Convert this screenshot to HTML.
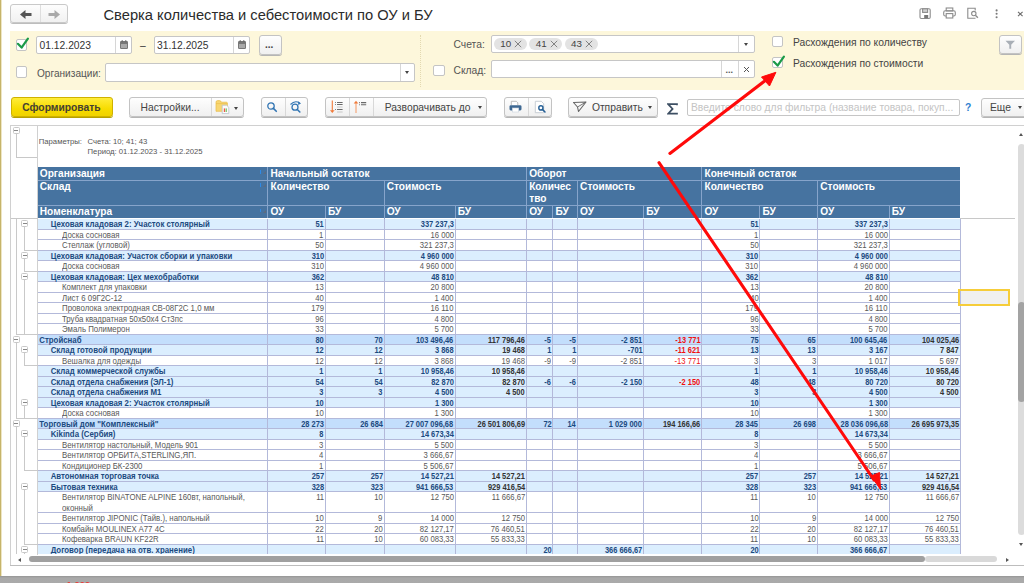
<!DOCTYPE html>
<html><head><meta charset="utf-8"><style>
html,body{margin:0;padding:0;background:#fff;}
body{width:1024px;height:583px;overflow:hidden;position:relative;font-family:"Liberation Sans",sans-serif;}
.a{position:absolute;}
.t{position:absolute;white-space:nowrap;}
</style></head><body>
<div class="a" style="left:0px;top:0px;width:1px;height:583px;background:#c6b46a"></div>
<div class="a" style="left:1px;top:0px;width:1px;height:583px;background:#eee6c4"></div>
<div class="a" style="left:10.2px;top:4.2px;width:58.3px;height:19.2px;box-sizing:border-box;border:1px solid #c9c9c9;border-radius:3px;background:linear-gradient(#fdfdfd,#f1f1f1);box-shadow:0 1px 0 #bdbdbd"></div>
<div class="a" style="left:40px;top:5.2px;width:1px;height:17.2px;background:#dedede"></div>
<svg class="a" style="left:18.8px;top:9px" width="16" height="11" viewBox="0 0 16 11"><path d="M1 5.5 L6.5 1 V4 H12.5 V7 H6.5 V10 Z" fill="#555"/></svg>
<svg class="a" style="left:44.8px;top:9px" width="16" height="11" viewBox="0 0 16 11"><path d="M15 5.5 L9.5 1 V4 H3.5 V7 H9.5 V10 Z" fill="#a9a9a9"/></svg>
<div class="t" style="left:103.5px;top:7.26px;font-size:14.7px;line-height:16.9px;color:#2b2b2b;transform:scaleY(1.04);transform-origin:0 13.54px;">Сверка количества и себестоимости по ОУ и БУ</div>
<svg class="a" style="left:0;top:0" width="1024" height="28" viewBox="0 0 1024 28">
<g fill="none" stroke="#8c8c8c" stroke-width="1.1">
<rect x="920" y="8.8" width="10.2" height="9.7" rx="1.2"/>
<rect x="922.6" y="8.8" width="5" height="3.6" fill="#d0d0d0"/>
<rect x="946.2" y="8" width="6.6" height="3"/>
<rect x="943.7" y="10.8" width="11.6" height="5.2" rx="1.6"/>
<rect x="946.2" y="13.6" width="6.6" height="4.4" fill="#fff"/>
<path d="M975.5 18.2 H967.8 V8.2 H975.2 V10.5"/>
<circle cx="973.8" cy="13.6" r="2.2"/>
</g>
<path d="M975.4 15.2 L977.9 17.8" stroke="#8c8c8c" stroke-width="1.4"/>
<rect x="924.2" y="15" width="4" height="3.2" fill="#777"/>
<g fill="#7a7a7a"><circle cx="996.6" cy="10.4" r="1.05"/><circle cx="996.6" cy="13.8" r="1.05"/><circle cx="996.6" cy="17.2" r="1.05"/></g>
<path d="M1018 11.8 L1022.6 16.2 M1022.6 11.8 L1018 16.2" stroke="#6a6a6a" stroke-width="1.1"/>
</svg>
<div class="a" style="left:10px;top:30.5px;width:1014px;height:59px;background:#fdf7db"></div>
<div class="a" style="left:15.6px;top:39.3px;width:11.5px;height:11.5px;box-sizing:border-box;border:1px solid #c4c4c4;border-radius:2px;background:#fff"></div>
<svg class="a" style="left:15.6px;top:35.3px" width="14" height="15" viewBox="0 0 14 15"><path d="M1.9 8.8 L5.6 12.6 L11.9 3.6" fill="none" stroke="#1a9a48" stroke-width="2.2" stroke-linecap="round" stroke-linejoin="round"/></svg>
<div class="a" style="left:36.2px;top:36.2px;width:95.8px;height:18.3px;box-sizing:border-box;border:1px solid #c6c6c6;border-radius:2px;background:#fff"></div>
<div class="a" style="left:115px;top:37.2px;width:1px;height:16.3px;background:#d6d6d6"></div>
<div class="t" style="left:39.5px;top:40.01px;font-size:10.3px;line-height:11.85px;color:#333;">01.12.2023</div>
<svg class="a" style="left:119px;top:39px" width="10" height="11" viewBox="0 0 10 11"><rect x="1" y="2" width="8" height="8" rx="1.3" fill="#777"/><rect x="2" y="5" width="6" height="4" fill="#a9a9a9"/><path d="M3.2 1V3.2M6.8 1V3.2" stroke="#666" stroke-width="0.9"/></svg>
<div class="t" style="left:140px;top:40.01px;font-size:10.3px;line-height:11.85px;color:#333;">–</div>
<div class="a" style="left:153.8px;top:36.2px;width:96.2px;height:18.3px;box-sizing:border-box;border:1px solid #c6c6c6;border-radius:2px;background:#fff"></div>
<div class="a" style="left:233px;top:37.2px;width:1px;height:16.3px;background:#d6d6d6"></div>
<div class="t" style="left:157px;top:40.01px;font-size:10.3px;line-height:11.85px;color:#333;">31.12.2025</div>
<svg class="a" style="left:237px;top:39px" width="10" height="11" viewBox="0 0 10 11"><rect x="1" y="2" width="8" height="8" rx="1.3" fill="#777"/><rect x="2" y="5" width="6" height="4" fill="#a9a9a9"/><path d="M3.2 1V3.2M6.8 1V3.2" stroke="#666" stroke-width="0.9"/></svg>
<div class="a" style="left:258.5px;top:35px;width:23px;height:19.5px;box-sizing:border-box;border:1px solid #c3c3c3;border-radius:3px;background:linear-gradient(#fefefe,#f0f0f0);box-shadow:0 1px 0 #b5b5b5;"></div>
<div class="t" style="left:265px;top:39.28px;font-size:10px;line-height:11.5px;color:#444;font-weight:bold;">...</div>
<div class="a" style="left:15.6px;top:66.2px;width:11.5px;height:11.5px;box-sizing:border-box;border:1px solid #c4c4c4;border-radius:2px;background:#fff"></div>
<div class="t" style="left:37px;top:67.70px;font-size:10.1px;line-height:11.61px;color:#555;">Организации:</div>
<div class="a" style="left:105.2px;top:63px;width:310.3px;height:18.6px;box-sizing:border-box;border:1px solid #c6c6c6;border-radius:2px;background:#fff"></div>
<div class="a" style="left:400px;top:64px;width:1px;height:16.6px;background:#d6d6d6"></div>
<div class="a" style="left:405px;top:71px;width:0;height:0;border-left:2.5px solid transparent;border-right:2.5px solid transparent;border-top:3px solid #444"></div>
<div class="a" style="left:420px;top:35px;width:0px;height:52px;border-left:1px dotted #e3d9b0"></div>
<div class="t" style="left:453.5px;top:39.01px;font-size:10.3px;line-height:11.85px;color:#555;">Счета:</div>
<div class="a" style="left:491px;top:35px;width:263.8px;height:17.5px;box-sizing:border-box;border:1px solid #c6c6c6;border-radius:2px;background:#fff"></div>
<div class="a" style="left:738px;top:36px;width:1px;height:15.5px;background:#d6d6d6"></div>
<div class="a" style="left:743.5px;top:42.5px;width:0;height:0;border-left:2.5px solid transparent;border-right:2.5px solid transparent;border-top:3px solid #444"></div>
<div class="a" style="left:493.7px;top:37.5px;width:33.2px;height:12.7px;background:#e3e3e3;border-radius:6.4px"></div>
<div class="t" style="left:500.2px;top:38.47px;font-size:9.8px;line-height:11.27px;color:#444;">10</div>
<svg class="a" style="left:514.2px;top:40px" width="8" height="8" viewBox="0 0 8 8"><path d="M0.8 0.8L7.2 7.2M7.2 0.8L0.8 7.2" stroke="#777" stroke-width="0.9"/></svg>
<div class="a" style="left:529.2px;top:37.5px;width:32.8px;height:12.7px;background:#e3e3e3;border-radius:6.4px"></div>
<div class="t" style="left:535.7px;top:38.47px;font-size:9.8px;line-height:11.27px;color:#444;">41</div>
<svg class="a" style="left:549.7px;top:40px" width="8" height="8" viewBox="0 0 8 8"><path d="M0.8 0.8L7.2 7.2M7.2 0.8L0.8 7.2" stroke="#777" stroke-width="0.9"/></svg>
<div class="a" style="left:564.5px;top:37.5px;width:33.4px;height:12.7px;background:#e3e3e3;border-radius:6.4px"></div>
<div class="t" style="left:571.0px;top:38.47px;font-size:9.8px;line-height:11.27px;color:#444;">43</div>
<svg class="a" style="left:585.0px;top:40px" width="8" height="8" viewBox="0 0 8 8"><path d="M0.8 0.8L7.2 7.2M7.2 0.8L0.8 7.2" stroke="#777" stroke-width="0.9"/></svg>
<div class="a" style="left:433px;top:64.5px;width:11.5px;height:11.5px;box-sizing:border-box;border:1px solid #c4c4c4;border-radius:2px;background:#fff"></div>
<div class="t" style="left:453.5px;top:64.51px;font-size:10.3px;line-height:11.85px;color:#555;">Склад:</div>
<div class="a" style="left:491px;top:60.3px;width:263.8px;height:18.2px;box-sizing:border-box;border:1px solid #c6c6c6;border-radius:2px;background:#fff"></div>
<div class="a" style="left:721.3px;top:61.3px;width:1px;height:16.2px;background:#d6d6d6"></div>
<div class="a" style="left:738px;top:61.3px;width:1px;height:16.2px;background:#d6d6d6"></div>
<div class="t" style="left:725.5px;top:65.21px;font-size:9px;line-height:10.35px;color:#555;font-weight:bold;">...</div>
<svg class="a" style="left:742.5px;top:66px" width="7" height="7" viewBox="0 0 7 7"><path d="M1 1L6 6M6 1L1 6" stroke="#555" stroke-width="1"/></svg>
<div class="a" style="left:771.6px;top:35.5px;width:11.5px;height:11.5px;box-sizing:border-box;border:1px solid #c4c4c4;border-radius:2px;background:#fff"></div>
<div class="t" style="left:792.9px;top:36.91px;font-size:10.3px;line-height:11.85px;color:#444;transform:scaleY(1.05);transform-origin:0 9.49px;">Расхождения по количеству</div>
<div class="a" style="left:771.6px;top:56.6px;width:11.5px;height:11.5px;box-sizing:border-box;border:1px solid #c4c4c4;border-radius:2px;background:#fff"></div>
<svg class="a" style="left:771.6px;top:52.6px" width="14" height="15" viewBox="0 0 14 15"><path d="M1.9 8.8 L5.6 12.6 L11.9 3.6" fill="none" stroke="#1a9a48" stroke-width="2.2" stroke-linecap="round" stroke-linejoin="round"/></svg>
<div class="t" style="left:792.9px;top:58.01px;font-size:10.3px;line-height:11.85px;color:#444;transform:scaleY(1.05);transform-origin:0 9.49px;">Расхождения по стоимости</div>
<div class="a" style="left:999.2px;top:35px;width:23.3px;height:19px;box-sizing:border-box;border:1px solid #c3c3c3;border-radius:3px;background:linear-gradient(#fefefe,#f0f0f0);box-shadow:0 1px 0 #b5b5b5;"></div>
<svg class="a" style="left:1005px;top:40px" width="11" height="10" viewBox="0 0 11 10"><path d="M0.5 0.8H10L6.2 4.8V8.8H4.3V4.8Z" fill="#a9afb6"/></svg>
<div class="a" style="left:10.6px;top:97.2px;width:102px;height:19.4px;box-sizing:border-box;border:1px solid #cfb100;border-radius:3px;background:linear-gradient(#ffec3a,#f7dc00 60%,#f0d200);box-shadow:0 1px 0 #b5a000"></div>
<div class="t" style="left:22.2px;top:102.11px;font-size:10.3px;line-height:11.85px;color:#444033;font-weight:bold;transform:scaleY(1.06);transform-origin:0 9.49px;">Сформировать</div>
<div class="a" style="left:129px;top:97.2px;width:114.9px;height:19.4px;box-sizing:border-box;border:1px solid #c3c3c3;border-radius:3px;background:linear-gradient(#fefefe,#f0f0f0);box-shadow:0 1px 0 #b5b5b5;"></div>
<div class="a" style="left:211px;top:98.2px;width:1px;height:17.4px;background:#d8d8d8"></div>
<div class="t" style="left:140.5px;top:102.11px;font-size:10.3px;line-height:11.85px;color:#444;">Настройки...</div>
<svg class="a" style="left:214px;top:99px" width="18" height="16" viewBox="0 0 18 16"><path d="M2 3.2Q2 1.6 3.6 1.6H5.6Q7 1.6 7.3 3.2H12.3Q13.4 3.2 13.4 4.2V12.3H2Z" fill="#f8d672" stroke="#e8bb48" stroke-width="0.7"/><path d="M2 4.6H13.4" stroke="#e8bb48" stroke-width="0.6"/><path d="M8.2 6.2H12.6L14.8 8.3V14.6H8.2Z" fill="#fbfbfb" stroke="#b9c2cc" stroke-width="0.8"/><rect x="9.8" y="9.4" width="1.3" height="3.6" fill="#ee5a4a"/><rect x="11.6" y="9.4" width="1.3" height="3.6" fill="#7bc66a"/></svg>
<div class="a" style="left:234px;top:107px;width:0;height:0;border-left:2.5px solid transparent;border-right:2.5px solid transparent;border-top:3px solid #444"></div>
<div class="a" style="left:260.5px;top:97.2px;width:47.5px;height:19.4px;box-sizing:border-box;border:1px solid #c3c3c3;border-radius:3px;background:linear-gradient(#fefefe,#f0f0f0);box-shadow:0 1px 0 #b5b5b5;"></div>
<div class="a" style="left:284.75px;top:98.2px;width:1px;height:17.4px;background:#d8d8d8"></div>
<svg class="a" style="left:266px;top:101px" width="13" height="12" viewBox="0 0 13 12"><circle cx="5" cy="5" r="3.2" fill="none" stroke="#3275b3" stroke-width="1.3"/><path d="M7.4 7.4L10.3 10.3" stroke="#3275b3" stroke-width="1.6" stroke-linecap="round"/></svg>
<svg class="a" style="left:289px;top:100px" width="14" height="13" viewBox="0 0 14 13"><circle cx="6" cy="7.2" r="3" fill="none" stroke="#3275b3" stroke-width="1.3"/><path d="M8.3 9.5L10.8 12" stroke="#3275b3" stroke-width="1.6" stroke-linecap="round"/><path d="M1.5 4.5 Q6 0 10.5 3" fill="none" stroke="#3275b3" stroke-width="1.1"/><path d="M9.2 1.2L12 3.6L9.2 5" fill="#3275b3"/></svg>
<div class="a" style="left:324.75px;top:97.2px;width:162.5px;height:19.4px;box-sizing:border-box;border:1px solid #c3c3c3;border-radius:3px;background:linear-gradient(#fefefe,#f0f0f0);box-shadow:0 1px 0 #b5b5b5;"></div>
<div class="a" style="left:349.25px;top:98.2px;width:1px;height:17.4px;background:#d8d8d8"></div>
<div class="a" style="left:373px;top:98.2px;width:1px;height:17.4px;background:#d8d8d8"></div>
<svg class="a" style="left:328px;top:99px" width="18" height="16" viewBox="0 0 18 16"><path d="M4.3 1.5V12" stroke="#f07a3a" stroke-width="1.1"/><path d="M2 11.2L4.3 14L6.6 11.2Z" fill="#f07a3a"/><g stroke="#6a6a6a" stroke-width="1"><path d="M7 3.5H7.8M9 3.5H14.6M7 5.5H7.8M9 5.5H14.6M7 10.5H7.8M9 10.5H14.6"/></g><g stroke="#bbb" stroke-width="0.8"><path d="M9 8H14.6M9 13H14.6"/></g></svg>
<svg class="a" style="left:352px;top:99px" width="18" height="16" viewBox="0 0 18 16"><path d="M4 4V14" stroke="#f4a070" stroke-width="1.1"/><path d="M1.7 4.6L4 1.8L6.3 4.6Z" fill="#f07a3a"/><g stroke="#6a6a6a" stroke-width="1.1"><path d="M7 3.6H7.8M9 3.6H14.2M7 5.8H7.8M9 5.8H14.2"/></g></svg>
<div class="t" style="left:384.7px;top:102.11px;font-size:10.3px;line-height:11.85px;color:#444;">Разворачивать до</div>
<div class="a" style="left:478px;top:106px;width:0;height:0;border-left:2.5px solid transparent;border-right:2.5px solid transparent;border-top:3px solid #444"></div>
<div class="a" style="left:503.5px;top:97.2px;width:48px;height:19.4px;box-sizing:border-box;border:1px solid #c3c3c3;border-radius:3px;background:linear-gradient(#fefefe,#f0f0f0);box-shadow:0 1px 0 #b5b5b5;"></div>
<div class="a" style="left:528.25px;top:98.2px;width:1px;height:17.4px;background:#d8d8d8"></div>
<svg class="a" style="left:508px;top:99px" width="16" height="15" viewBox="0 0 16 15"><path d="M3.3 6V2.3H8.3L9.8 3.8V6" fill="#fff" stroke="#b5b5b5" stroke-width="0.9"/><rect x="1.5" y="6.2" width="12" height="5.2" rx="1.3" fill="#3e6892"/><rect x="4.3" y="9" width="6.4" height="4" fill="#fff" stroke="#c9d3dd" stroke-width="0.6"/></svg>
<svg class="a" style="left:533px;top:99px" width="15" height="16" viewBox="0 0 15 16"><path d="M2.3 2.3H8.3L10.7 4.7V13.7H2.3Z" fill="#fff" stroke="#c2c8d0" stroke-width="0.9"/><circle cx="7.9" cy="8.9" r="2.1" fill="none" stroke="#245f95" stroke-width="1.4"/><path d="M9.4 10.4L12 13" stroke="#245f95" stroke-width="1.5" stroke-linecap="round"/></svg>
<div class="a" style="left:568.25px;top:97.2px;width:89.25px;height:19.4px;box-sizing:border-box;border:1px solid #c3c3c3;border-radius:3px;background:linear-gradient(#fefefe,#f0f0f0);box-shadow:0 1px 0 #b5b5b5;"></div>
<svg class="a" style="left:572px;top:100px" width="16" height="13" viewBox="0 0 16 13"><path d="M1.5 2.5L14 2L6.5 11.5L5.5 7Z" fill="none" stroke="#666" stroke-width="1.1" stroke-linejoin="round"/><path d="M5.5 7L13.5 2.3" stroke="#666" stroke-width="0.9"/></svg>
<div class="t" style="left:591.9px;top:102.11px;font-size:10.3px;line-height:11.85px;color:#444;">Отправить</div>
<div class="a" style="left:648px;top:106px;width:0;height:0;border-left:2.5px solid transparent;border-right:2.5px solid transparent;border-top:3px solid #444"></div>
<svg class="a" style="left:667px;top:102.5px" width="11" height="12" viewBox="0 0 11 12"><path d="M10 2.2 V1.2 H1.2 L5.6 5.9 L1.2 10.7 H10 V9.7" fill="none" stroke="#3d4f63" stroke-width="1.7" stroke-linejoin="miter"/></svg>
<div class="a" style="left:687px;top:98.75px;width:273px;height:17.5px;box-sizing:border-box;border:1px solid #c6c6c6;border-radius:2px;background:#fff"></div>
<div class="t" style="left:691px;top:101.51px;font-size:10.3px;line-height:11.85px;color:#c4c4c4;">Введите слово для фильтра (название товара, покуп...</div>
<div class="t" style="left:965px;top:101.51px;font-size:10.3px;line-height:11.85px;color:#2f7fd0;font-weight:bold;">?</div>
<div class="a" style="left:980.5px;top:97.5px;width:60px;height:19.3px;box-sizing:border-box;border:1px solid #c3c3c3;border-radius:3px;background:linear-gradient(#fefefe,#f0f0f0);box-shadow:0 1px 0 #b5b5b5;"></div>
<div class="t" style="left:990px;top:102.11px;font-size:10.3px;line-height:11.85px;color:#444;">Еще</div>
<div class="a" style="left:1017.5px;top:106px;width:0;height:0;border-left:2.5px solid transparent;border-right:2.5px solid transparent;border-top:3px solid #444"></div>
<div class="a" style="left:10px;top:125px;width:1014px;height:1px;background:#d0d0d0"></div>
<div class="a" style="left:10px;top:125px;width:1px;height:440.5px;background:#d0d0d0"></div>
<div class="a" style="left:10px;top:565px;width:1014px;height:1px;background:#bdbdbd"></div>
<div class="a" style="left:37px;top:125px;width:1px;height:430px;background:#d0d0d0"></div>
<div class="a" style="left:15.5px;top:134px;width:1px;height:22.5px;background:#c8c8c8"></div>
<div class="a" style="left:15.5px;top:156.5px;width:21px;height:1px;background:#c8c8c8"></div>
<div class="a" style="left:12.5px;top:127.30000000000001px;width:7px;height:7px;box-sizing:border-box;border:1px solid #c8c8c8;border-radius:1.5px;background:#fff"></div>
<div class="a" style="left:14px;top:130.3px;width:4px;height:1px;background:#888"></div>
<div class="t" style="left:38.8px;top:137.91px;font-size:7.7px;line-height:8.85px;color:#555;">Параметры:</div>
<div class="t" style="left:87.6px;top:137.91px;font-size:7.7px;line-height:8.85px;color:#555;">Счета: 10; 41; 43</div>
<div class="t" style="left:87.6px;top:148.31px;font-size:7.7px;line-height:8.85px;color:#555;">Период: 01.12.2023 - 31.12.2025</div>
<div class="a" style="left:37.5px;top:166.8px;width:922.8px;height:51.69999999999999px;background:#4673a0"></div>
<div class="a" style="left:37.5px;top:179.5px;width:922.8px;height:1px;background:#86a4cb"></div>
<div class="a" style="left:37.5px;top:205.3px;width:922.8px;height:1px;background:#86a4cb"></div>
<div class="a" style="left:267.3px;top:166.8px;width:1px;height:51.69999999999999px;background:#86a4cb"></div>
<div class="a" style="left:526.0px;top:166.8px;width:1px;height:51.69999999999999px;background:#86a4cb"></div>
<div class="a" style="left:701.3px;top:166.8px;width:1px;height:51.69999999999999px;background:#86a4cb"></div>
<div class="a" style="left:383.5px;top:179.5px;width:1px;height:39.0px;background:#86a4cb"></div>
<div class="a" style="left:576.9px;top:179.5px;width:1px;height:39.0px;background:#86a4cb"></div>
<div class="a" style="left:817.1px;top:179.5px;width:1px;height:39.0px;background:#86a4cb"></div>
<div class="a" style="left:324.7px;top:205.3px;width:1px;height:13.199999999999989px;background:#86a4cb"></div>
<div class="a" style="left:454.5px;top:205.3px;width:1px;height:13.199999999999989px;background:#86a4cb"></div>
<div class="a" style="left:552.3px;top:205.3px;width:1px;height:13.199999999999989px;background:#86a4cb"></div>
<div class="a" style="left:643.1px;top:205.3px;width:1px;height:13.199999999999989px;background:#86a4cb"></div>
<div class="a" style="left:759.3px;top:205.3px;width:1px;height:13.199999999999989px;background:#86a4cb"></div>
<div class="a" style="left:888.6px;top:205.3px;width:1px;height:13.199999999999989px;background:#86a4cb"></div>
<div class="t" style="left:39.8px;top:167.85px;font-size:10.15px;line-height:11.67px;color:#ffffff;font-weight:bold;">Организация</div>
<div class="t" style="left:39.8px;top:180.95px;font-size:10.15px;line-height:11.67px;color:#ffffff;font-weight:bold;">Склад</div>
<div class="t" style="left:39.8px;top:206.35px;font-size:10.15px;line-height:11.67px;color:#ffffff;font-weight:bold;">Номенклатура</div>
<div class="t" style="left:270.5px;top:167.85px;font-size:10.15px;line-height:11.67px;color:#ffffff;font-weight:bold;">Начальный остаток</div>
<div class="t" style="left:529.2px;top:167.85px;font-size:10.15px;line-height:11.67px;color:#ffffff;font-weight:bold;">Оборот</div>
<div class="t" style="left:704.5px;top:167.85px;font-size:10.15px;line-height:11.67px;color:#ffffff;font-weight:bold;">Конечный остаток</div>
<div class="t" style="left:270.5px;top:180.95px;font-size:10.15px;line-height:11.67px;color:#ffffff;font-weight:bold;">Количество</div>
<div class="t" style="left:386.7px;top:180.95px;font-size:10.15px;line-height:11.67px;color:#ffffff;font-weight:bold;">Стоимость</div>
<div class="t" style="left:580.1px;top:180.95px;font-size:10.15px;line-height:11.67px;color:#ffffff;font-weight:bold;">Стоимость</div>
<div class="t" style="left:704.5px;top:180.95px;font-size:10.15px;line-height:11.67px;color:#ffffff;font-weight:bold;">Количество</div>
<div class="t" style="left:820.3000000000001px;top:180.95px;font-size:10.15px;line-height:11.67px;color:#ffffff;font-weight:bold;">Стоимость</div>
<div class="t" style="left:529.2px;top:180.95px;font-size:10.15px;line-height:11.67px;color:#ffffff;font-weight:bold;">Количес</div>
<div class="t" style="left:529.2px;top:193.25px;font-size:10.15px;line-height:11.67px;color:#ffffff;font-weight:bold;">тво</div>
<div class="t" style="left:270.5px;top:206.35px;font-size:10.15px;line-height:11.67px;color:#ffffff;font-weight:bold;">ОУ</div>
<div class="t" style="left:327.9px;top:206.35px;font-size:10.15px;line-height:11.67px;color:#ffffff;font-weight:bold;">БУ</div>
<div class="t" style="left:386.7px;top:206.35px;font-size:10.15px;line-height:11.67px;color:#ffffff;font-weight:bold;">ОУ</div>
<div class="t" style="left:457.7px;top:206.35px;font-size:10.15px;line-height:11.67px;color:#ffffff;font-weight:bold;">БУ</div>
<div class="t" style="left:529.2px;top:206.35px;font-size:10.15px;line-height:11.67px;color:#ffffff;font-weight:bold;">ОУ</div>
<div class="t" style="left:555.5px;top:206.35px;font-size:10.15px;line-height:11.67px;color:#ffffff;font-weight:bold;">БУ</div>
<div class="t" style="left:580.1px;top:206.35px;font-size:10.15px;line-height:11.67px;color:#ffffff;font-weight:bold;">ОУ</div>
<div class="t" style="left:646.3000000000001px;top:206.35px;font-size:10.15px;line-height:11.67px;color:#ffffff;font-weight:bold;">БУ</div>
<div class="t" style="left:704.5px;top:206.35px;font-size:10.15px;line-height:11.67px;color:#ffffff;font-weight:bold;">ОУ</div>
<div class="t" style="left:762.5px;top:206.35px;font-size:10.15px;line-height:11.67px;color:#ffffff;font-weight:bold;">БУ</div>
<div class="t" style="left:820.3000000000001px;top:206.35px;font-size:10.15px;line-height:11.67px;color:#ffffff;font-weight:bold;">ОУ</div>
<div class="t" style="left:891.8000000000001px;top:206.35px;font-size:10.15px;line-height:11.67px;color:#ffffff;font-weight:bold;">БУ</div>
<div class="a" style="left:260.3px;top:170.2px;width:1.2px;height:3.8px;background:#2f8ae6"></div>
<div class="a" style="left:262.8px;top:171.2px;width:0;height:0;border-left:3.5px solid transparent;border-bottom:3px solid #5b6b80"></div>
<div class="a" style="left:260.3px;top:183.2px;width:1.2px;height:3.8px;background:#2f8ae6"></div>
<div class="a" style="left:262.8px;top:184.2px;width:0;height:0;border-left:3.5px solid transparent;border-bottom:3px solid #5b6b80"></div>
<div class="a" style="left:260.3px;top:208.5px;width:1.2px;height:3.8px;background:#2f8ae6"></div>
<div class="a" style="left:262.8px;top:209.5px;width:0;height:0;border-left:3.5px solid transparent;border-bottom:3px solid #5b6b80"></div>
<div class="a" style="left:0;top:0;width:1024px;height:554px;overflow:hidden">
<div class="a" style="left:37.5px;top:218.5px;width:922.8px;height:11.0px;background:#dbeefe"></div>
<div class="a" style="left:37.5px;top:229.0px;width:922.8px;height:11.0px;background:#ffffff"></div>
<div class="a" style="left:37.5px;top:239.5px;width:922.8px;height:11.0px;background:#ffffff"></div>
<div class="a" style="left:37.5px;top:250.0px;width:922.8px;height:11.0px;background:#dbeefe"></div>
<div class="a" style="left:37.5px;top:260.5px;width:922.8px;height:11.0px;background:#ffffff"></div>
<div class="a" style="left:37.5px;top:271.0px;width:922.8px;height:11.0px;background:#dbeefe"></div>
<div class="a" style="left:37.5px;top:281.5px;width:922.8px;height:11.0px;background:#ffffff"></div>
<div class="a" style="left:37.5px;top:292.0px;width:922.8px;height:11.0px;background:#ffffff"></div>
<div class="a" style="left:37.5px;top:302.5px;width:922.8px;height:11.0px;background:#ffffff"></div>
<div class="a" style="left:37.5px;top:313.0px;width:922.8px;height:11.0px;background:#ffffff"></div>
<div class="a" style="left:37.5px;top:323.5px;width:922.8px;height:11.0px;background:#ffffff"></div>
<div class="a" style="left:37.5px;top:334.0px;width:922.8px;height:11.0px;background:#c3defc"></div>
<div class="a" style="left:37.5px;top:344.5px;width:922.8px;height:11.0px;background:#dbeefe"></div>
<div class="a" style="left:37.5px;top:355.0px;width:922.8px;height:11.0px;background:#ffffff"></div>
<div class="a" style="left:37.5px;top:365.5px;width:922.8px;height:11.0px;background:#dbeefe"></div>
<div class="a" style="left:37.5px;top:376.0px;width:922.8px;height:11.0px;background:#dbeefe"></div>
<div class="a" style="left:37.5px;top:386.5px;width:922.8px;height:11.0px;background:#dbeefe"></div>
<div class="a" style="left:37.5px;top:397.0px;width:922.8px;height:11.0px;background:#dbeefe"></div>
<div class="a" style="left:37.5px;top:407.5px;width:922.8px;height:11.0px;background:#ffffff"></div>
<div class="a" style="left:37.5px;top:418.0px;width:922.8px;height:11.0px;background:#c3defc"></div>
<div class="a" style="left:37.5px;top:428.5px;width:922.8px;height:11.0px;background:#dbeefe"></div>
<div class="a" style="left:37.5px;top:439.0px;width:922.8px;height:11.0px;background:#ffffff"></div>
<div class="a" style="left:37.5px;top:449.5px;width:922.8px;height:11.0px;background:#ffffff"></div>
<div class="a" style="left:37.5px;top:460.0px;width:922.8px;height:11.0px;background:#ffffff"></div>
<div class="a" style="left:37.5px;top:470.5px;width:922.8px;height:11.0px;background:#dbeefe"></div>
<div class="a" style="left:37.5px;top:481.0px;width:922.8px;height:11.0px;background:#dbeefe"></div>
<div class="a" style="left:37.5px;top:491.5px;width:922.8px;height:21.5px;background:#ffffff"></div>
<div class="a" style="left:37.5px;top:512.5px;width:922.8px;height:11.0px;background:#ffffff"></div>
<div class="a" style="left:37.5px;top:523.0px;width:922.8px;height:11.0px;background:#ffffff"></div>
<div class="a" style="left:37.5px;top:533.5px;width:922.8px;height:11.0px;background:#ffffff"></div>
<div class="a" style="left:37.5px;top:544.0px;width:922.8px;height:11.0px;background:#dbeefe"></div>
<div class="a" style="left:37.5px;top:228.5px;width:922.8px;height:1px;background:#b3b9da"></div>
<div class="a" style="left:37.5px;top:239.0px;width:922.8px;height:1px;background:#b3b9da"></div>
<div class="a" style="left:37.5px;top:249.5px;width:922.8px;height:1px;background:#b3b9da"></div>
<div class="a" style="left:37.5px;top:260.0px;width:922.8px;height:1px;background:#b3b9da"></div>
<div class="a" style="left:37.5px;top:270.5px;width:922.8px;height:1px;background:#b3b9da"></div>
<div class="a" style="left:37.5px;top:281.0px;width:922.8px;height:1px;background:#b3b9da"></div>
<div class="a" style="left:37.5px;top:291.5px;width:922.8px;height:1px;background:#b3b9da"></div>
<div class="a" style="left:37.5px;top:302.0px;width:922.8px;height:1px;background:#b3b9da"></div>
<div class="a" style="left:37.5px;top:312.5px;width:922.8px;height:1px;background:#b3b9da"></div>
<div class="a" style="left:37.5px;top:323.0px;width:922.8px;height:1px;background:#b3b9da"></div>
<div class="a" style="left:37.5px;top:333.5px;width:922.8px;height:1px;background:#b3b9da"></div>
<div class="a" style="left:37.5px;top:344.0px;width:922.8px;height:1px;background:#b3b9da"></div>
<div class="a" style="left:37.5px;top:354.5px;width:922.8px;height:1px;background:#b3b9da"></div>
<div class="a" style="left:37.5px;top:365.0px;width:922.8px;height:1px;background:#b3b9da"></div>
<div class="a" style="left:37.5px;top:375.5px;width:922.8px;height:1px;background:#b3b9da"></div>
<div class="a" style="left:37.5px;top:386.0px;width:922.8px;height:1px;background:#b3b9da"></div>
<div class="a" style="left:37.5px;top:396.5px;width:922.8px;height:1px;background:#b3b9da"></div>
<div class="a" style="left:37.5px;top:407.0px;width:922.8px;height:1px;background:#b3b9da"></div>
<div class="a" style="left:37.5px;top:417.5px;width:922.8px;height:1px;background:#b3b9da"></div>
<div class="a" style="left:37.5px;top:428.0px;width:922.8px;height:1px;background:#b3b9da"></div>
<div class="a" style="left:37.5px;top:438.5px;width:922.8px;height:1px;background:#b3b9da"></div>
<div class="a" style="left:37.5px;top:449.0px;width:922.8px;height:1px;background:#b3b9da"></div>
<div class="a" style="left:37.5px;top:459.5px;width:922.8px;height:1px;background:#b3b9da"></div>
<div class="a" style="left:37.5px;top:470.0px;width:922.8px;height:1px;background:#b3b9da"></div>
<div class="a" style="left:37.5px;top:480.5px;width:922.8px;height:1px;background:#b3b9da"></div>
<div class="a" style="left:37.5px;top:491.0px;width:922.8px;height:1px;background:#b3b9da"></div>
<div class="a" style="left:37.5px;top:512.0px;width:922.8px;height:1px;background:#b3b9da"></div>
<div class="a" style="left:37.5px;top:522.5px;width:922.8px;height:1px;background:#b3b9da"></div>
<div class="a" style="left:37.5px;top:533.0px;width:922.8px;height:1px;background:#b3b9da"></div>
<div class="a" style="left:37.5px;top:543.5px;width:922.8px;height:1px;background:#b3b9da"></div>
<div class="a" style="left:37.5px;top:554.0px;width:922.8px;height:1px;background:#b3b9da"></div>
<div class="a" style="left:267.3px;top:218.5px;width:1px;height:336.0px;background:#b3b9da"></div>
<div class="a" style="left:324.7px;top:218.5px;width:1px;height:336.0px;background:#b3b9da"></div>
<div class="a" style="left:383.5px;top:218.5px;width:1px;height:336.0px;background:#b3b9da"></div>
<div class="a" style="left:454.5px;top:218.5px;width:1px;height:336.0px;background:#b3b9da"></div>
<div class="a" style="left:526.0px;top:218.5px;width:1px;height:336.0px;background:#b3b9da"></div>
<div class="a" style="left:552.3px;top:218.5px;width:1px;height:336.0px;background:#b3b9da"></div>
<div class="a" style="left:576.9px;top:218.5px;width:1px;height:336.0px;background:#b3b9da"></div>
<div class="a" style="left:643.1px;top:218.5px;width:1px;height:336.0px;background:#b3b9da"></div>
<div class="a" style="left:701.3px;top:218.5px;width:1px;height:336.0px;background:#b3b9da"></div>
<div class="a" style="left:759.3px;top:218.5px;width:1px;height:336.0px;background:#b3b9da"></div>
<div class="a" style="left:817.1px;top:218.5px;width:1px;height:336.0px;background:#b3b9da"></div>
<div class="a" style="left:888.6px;top:218.5px;width:1px;height:336.0px;background:#b3b9da"></div>
<div class="a" style="left:959.8px;top:218.5px;width:1px;height:336.0px;background:#b3b9da"></div>
<div class="t" style="left:50.7px;top:220.46px;font-size:7.85px;line-height:9.03px;color:#1c4a80;font-weight:bold;transform:scaleY(1.12);transform-origin:0 7.24px;">Цеховая кладовая 2: Участок столярный</div>
<div class="t" style="right:700.2px;top:220.46px;font-size:7.85px;line-height:9.03px;color:#1c4a80;font-weight:bold;transform:scale(0.95,1.12);transform-origin:100% 7.24px;">51</div>
<div class="t" style="right:570.4px;top:220.46px;font-size:7.85px;line-height:9.03px;color:#1c4a80;font-weight:bold;transform:scale(0.95,1.12);transform-origin:100% 7.24px;">337 237,3</div>
<div class="t" style="right:265.6px;top:220.46px;font-size:7.85px;line-height:9.03px;color:#1c4a80;font-weight:bold;transform:scale(0.95,1.12);transform-origin:100% 7.24px;">51</div>
<div class="t" style="right:136.29999999999995px;top:220.46px;font-size:7.85px;line-height:9.03px;color:#1c4a80;font-weight:bold;transform:scale(0.95,1.12);transform-origin:100% 7.24px;">337 237,3</div>
<div class="t" style="left:62px;top:230.96px;font-size:7.85px;line-height:9.03px;color:#585858;transform:scaleY(1.12);transform-origin:0 7.24px;">Доска сосновая</div>
<div class="t" style="right:700.2px;top:230.96px;font-size:7.85px;line-height:9.03px;color:#585858;transform:scale(0.98,1.12);transform-origin:100% 7.24px;">1</div>
<div class="t" style="right:570.4px;top:230.96px;font-size:7.85px;line-height:9.03px;color:#585858;transform:scale(0.98,1.12);transform-origin:100% 7.24px;">16 000</div>
<div class="t" style="right:265.6px;top:230.96px;font-size:7.85px;line-height:9.03px;color:#585858;transform:scale(0.98,1.12);transform-origin:100% 7.24px;">1</div>
<div class="t" style="right:136.29999999999995px;top:230.96px;font-size:7.85px;line-height:9.03px;color:#585858;transform:scale(0.98,1.12);transform-origin:100% 7.24px;">16 000</div>
<div class="t" style="left:62px;top:241.46px;font-size:7.85px;line-height:9.03px;color:#585858;transform:scaleY(1.12);transform-origin:0 7.24px;">Стеллаж (угловой)</div>
<div class="t" style="right:700.2px;top:241.46px;font-size:7.85px;line-height:9.03px;color:#585858;transform:scale(0.98,1.12);transform-origin:100% 7.24px;">50</div>
<div class="t" style="right:570.4px;top:241.46px;font-size:7.85px;line-height:9.03px;color:#585858;transform:scale(0.98,1.12);transform-origin:100% 7.24px;">321 237,3</div>
<div class="t" style="right:265.6px;top:241.46px;font-size:7.85px;line-height:9.03px;color:#585858;transform:scale(0.98,1.12);transform-origin:100% 7.24px;">50</div>
<div class="t" style="right:136.29999999999995px;top:241.46px;font-size:7.85px;line-height:9.03px;color:#585858;transform:scale(0.98,1.12);transform-origin:100% 7.24px;">321 237,3</div>
<div class="t" style="left:50.7px;top:251.96px;font-size:7.85px;line-height:9.03px;color:#1c4a80;font-weight:bold;transform:scaleY(1.12);transform-origin:0 7.24px;">Цеховая кладовая: Участок сборки и упаковки</div>
<div class="t" style="right:700.2px;top:251.96px;font-size:7.85px;line-height:9.03px;color:#1c4a80;font-weight:bold;transform:scale(0.95,1.12);transform-origin:100% 7.24px;">310</div>
<div class="t" style="right:570.4px;top:251.96px;font-size:7.85px;line-height:9.03px;color:#1c4a80;font-weight:bold;transform:scale(0.95,1.12);transform-origin:100% 7.24px;">4 960 000</div>
<div class="t" style="right:265.6px;top:251.96px;font-size:7.85px;line-height:9.03px;color:#1c4a80;font-weight:bold;transform:scale(0.95,1.12);transform-origin:100% 7.24px;">310</div>
<div class="t" style="right:136.29999999999995px;top:251.96px;font-size:7.85px;line-height:9.03px;color:#1c4a80;font-weight:bold;transform:scale(0.95,1.12);transform-origin:100% 7.24px;">4 960 000</div>
<div class="t" style="left:62px;top:262.46px;font-size:7.85px;line-height:9.03px;color:#585858;transform:scaleY(1.12);transform-origin:0 7.24px;">Доска сосновая</div>
<div class="t" style="right:700.2px;top:262.46px;font-size:7.85px;line-height:9.03px;color:#585858;transform:scale(0.98,1.12);transform-origin:100% 7.24px;">310</div>
<div class="t" style="right:570.4px;top:262.46px;font-size:7.85px;line-height:9.03px;color:#585858;transform:scale(0.98,1.12);transform-origin:100% 7.24px;">4 960 000</div>
<div class="t" style="right:265.6px;top:262.46px;font-size:7.85px;line-height:9.03px;color:#585858;transform:scale(0.98,1.12);transform-origin:100% 7.24px;">310</div>
<div class="t" style="right:136.29999999999995px;top:262.46px;font-size:7.85px;line-height:9.03px;color:#585858;transform:scale(0.98,1.12);transform-origin:100% 7.24px;">4 960 000</div>
<div class="t" style="left:50.7px;top:272.96px;font-size:7.85px;line-height:9.03px;color:#1c4a80;font-weight:bold;transform:scaleY(1.12);transform-origin:0 7.24px;">Цеховая кладовая: Цех мехобработки</div>
<div class="t" style="right:700.2px;top:272.96px;font-size:7.85px;line-height:9.03px;color:#1c4a80;font-weight:bold;transform:scale(0.95,1.12);transform-origin:100% 7.24px;">362</div>
<div class="t" style="right:570.4px;top:272.96px;font-size:7.85px;line-height:9.03px;color:#1c4a80;font-weight:bold;transform:scale(0.95,1.12);transform-origin:100% 7.24px;">48 810</div>
<div class="t" style="right:265.6px;top:272.96px;font-size:7.85px;line-height:9.03px;color:#1c4a80;font-weight:bold;transform:scale(0.95,1.12);transform-origin:100% 7.24px;">362</div>
<div class="t" style="right:136.29999999999995px;top:272.96px;font-size:7.85px;line-height:9.03px;color:#1c4a80;font-weight:bold;transform:scale(0.95,1.12);transform-origin:100% 7.24px;">48 810</div>
<div class="t" style="left:62px;top:283.46px;font-size:7.85px;line-height:9.03px;color:#585858;transform:scaleY(1.12);transform-origin:0 7.24px;">Комплект для упаковки</div>
<div class="t" style="right:700.2px;top:283.46px;font-size:7.85px;line-height:9.03px;color:#585858;transform:scale(0.98,1.12);transform-origin:100% 7.24px;">13</div>
<div class="t" style="right:570.4px;top:283.46px;font-size:7.85px;line-height:9.03px;color:#585858;transform:scale(0.98,1.12);transform-origin:100% 7.24px;">20 800</div>
<div class="t" style="right:265.6px;top:283.46px;font-size:7.85px;line-height:9.03px;color:#585858;transform:scale(0.98,1.12);transform-origin:100% 7.24px;">13</div>
<div class="t" style="right:136.29999999999995px;top:283.46px;font-size:7.85px;line-height:9.03px;color:#585858;transform:scale(0.98,1.12);transform-origin:100% 7.24px;">20 800</div>
<div class="t" style="left:62px;top:293.96px;font-size:7.85px;line-height:9.03px;color:#585858;transform:scaleY(1.12);transform-origin:0 7.24px;">Лист 6 09Г2С-12</div>
<div class="t" style="right:700.2px;top:293.96px;font-size:7.85px;line-height:9.03px;color:#585858;transform:scale(0.98,1.12);transform-origin:100% 7.24px;">40</div>
<div class="t" style="right:570.4px;top:293.96px;font-size:7.85px;line-height:9.03px;color:#585858;transform:scale(0.98,1.12);transform-origin:100% 7.24px;">1 400</div>
<div class="t" style="right:265.6px;top:293.96px;font-size:7.85px;line-height:9.03px;color:#585858;transform:scale(0.98,1.12);transform-origin:100% 7.24px;">40</div>
<div class="t" style="right:136.29999999999995px;top:293.96px;font-size:7.85px;line-height:9.03px;color:#585858;transform:scale(0.98,1.12);transform-origin:100% 7.24px;">1 400</div>
<div class="t" style="left:62px;top:304.46px;font-size:7.85px;line-height:9.03px;color:#585858;transform:scaleY(1.12);transform-origin:0 7.24px;">Проволока электродная СВ-08Г2С 1,0 мм</div>
<div class="t" style="right:700.2px;top:304.46px;font-size:7.85px;line-height:9.03px;color:#585858;transform:scale(0.98,1.12);transform-origin:100% 7.24px;">179</div>
<div class="t" style="right:570.4px;top:304.46px;font-size:7.85px;line-height:9.03px;color:#585858;transform:scale(0.98,1.12);transform-origin:100% 7.24px;">16 110</div>
<div class="t" style="right:265.6px;top:304.46px;font-size:7.85px;line-height:9.03px;color:#585858;transform:scale(0.98,1.12);transform-origin:100% 7.24px;">179</div>
<div class="t" style="right:136.29999999999995px;top:304.46px;font-size:7.85px;line-height:9.03px;color:#585858;transform:scale(0.98,1.12);transform-origin:100% 7.24px;">16 110</div>
<div class="t" style="left:62px;top:314.96px;font-size:7.85px;line-height:9.03px;color:#585858;transform:scaleY(1.12);transform-origin:0 7.24px;">Труба квадратная 50х50х4 Ст3пс</div>
<div class="t" style="right:700.2px;top:314.96px;font-size:7.85px;line-height:9.03px;color:#585858;transform:scale(0.98,1.12);transform-origin:100% 7.24px;">96</div>
<div class="t" style="right:570.4px;top:314.96px;font-size:7.85px;line-height:9.03px;color:#585858;transform:scale(0.98,1.12);transform-origin:100% 7.24px;">4 800</div>
<div class="t" style="right:265.6px;top:314.96px;font-size:7.85px;line-height:9.03px;color:#585858;transform:scale(0.98,1.12);transform-origin:100% 7.24px;">96</div>
<div class="t" style="right:136.29999999999995px;top:314.96px;font-size:7.85px;line-height:9.03px;color:#585858;transform:scale(0.98,1.12);transform-origin:100% 7.24px;">4 800</div>
<div class="t" style="left:62px;top:325.46px;font-size:7.85px;line-height:9.03px;color:#585858;transform:scaleY(1.12);transform-origin:0 7.24px;">Эмаль Полимерон</div>
<div class="t" style="right:700.2px;top:325.46px;font-size:7.85px;line-height:9.03px;color:#585858;transform:scale(0.98,1.12);transform-origin:100% 7.24px;">33</div>
<div class="t" style="right:570.4px;top:325.46px;font-size:7.85px;line-height:9.03px;color:#585858;transform:scale(0.98,1.12);transform-origin:100% 7.24px;">5 700</div>
<div class="t" style="right:265.6px;top:325.46px;font-size:7.85px;line-height:9.03px;color:#585858;transform:scale(0.98,1.12);transform-origin:100% 7.24px;">33</div>
<div class="t" style="right:136.29999999999995px;top:325.46px;font-size:7.85px;line-height:9.03px;color:#585858;transform:scale(0.98,1.12);transform-origin:100% 7.24px;">5 700</div>
<div class="t" style="left:39.3px;top:335.96px;font-size:7.85px;line-height:9.03px;color:#1c4a80;font-weight:bold;transform:scaleY(1.12);transform-origin:0 7.24px;">Стройснаб</div>
<div class="t" style="right:700.2px;top:335.96px;font-size:7.85px;line-height:9.03px;color:#1c4a80;font-weight:bold;transform:scale(0.95,1.12);transform-origin:100% 7.24px;">80</div>
<div class="t" style="right:641.4px;top:335.96px;font-size:7.85px;line-height:9.03px;color:#1c4a80;font-weight:bold;transform:scale(0.95,1.12);transform-origin:100% 7.24px;">70</div>
<div class="t" style="right:570.4px;top:335.96px;font-size:7.85px;line-height:9.03px;color:#1c4a80;font-weight:bold;transform:scale(0.95,1.12);transform-origin:100% 7.24px;">103 496,46</div>
<div class="t" style="right:498.9px;top:335.96px;font-size:7.85px;line-height:9.03px;color:#333333;font-weight:bold;transform:scale(0.95,1.12);transform-origin:100% 7.24px;">117 796,46</div>
<div class="t" style="right:472.6px;top:335.96px;font-size:7.85px;line-height:9.03px;color:#1c4a80;font-weight:bold;transform:scale(0.95,1.12);transform-origin:100% 7.24px;">-5</div>
<div class="t" style="right:448.0px;top:335.96px;font-size:7.85px;line-height:9.03px;color:#1c4a80;font-weight:bold;transform:scale(0.95,1.12);transform-origin:100% 7.24px;">-5</div>
<div class="t" style="right:381.79999999999995px;top:335.96px;font-size:7.85px;line-height:9.03px;color:#1c4a80;font-weight:bold;transform:scale(0.95,1.12);transform-origin:100% 7.24px;">-2 851</div>
<div class="t" style="right:323.6px;top:335.96px;font-size:7.85px;line-height:9.03px;color:#f01010;font-weight:bold;transform:scale(0.95,1.12);transform-origin:100% 7.24px;">-13 771</div>
<div class="t" style="right:265.6px;top:335.96px;font-size:7.85px;line-height:9.03px;color:#1c4a80;font-weight:bold;transform:scale(0.95,1.12);transform-origin:100% 7.24px;">75</div>
<div class="t" style="right:207.79999999999995px;top:335.96px;font-size:7.85px;line-height:9.03px;color:#1c4a80;font-weight:bold;transform:scale(0.95,1.12);transform-origin:100% 7.24px;">65</div>
<div class="t" style="right:136.29999999999995px;top:335.96px;font-size:7.85px;line-height:9.03px;color:#1c4a80;font-weight:bold;transform:scale(0.95,1.12);transform-origin:100% 7.24px;">100 645,46</div>
<div class="t" style="right:65.10000000000002px;top:335.96px;font-size:7.85px;line-height:9.03px;color:#333333;font-weight:bold;transform:scale(0.95,1.12);transform-origin:100% 7.24px;">104 025,46</div>
<div class="t" style="left:50.7px;top:346.46px;font-size:7.85px;line-height:9.03px;color:#1c4a80;font-weight:bold;transform:scaleY(1.12);transform-origin:0 7.24px;">Склад готовой продукции</div>
<div class="t" style="right:700.2px;top:346.46px;font-size:7.85px;line-height:9.03px;color:#1c4a80;font-weight:bold;transform:scale(0.95,1.12);transform-origin:100% 7.24px;">12</div>
<div class="t" style="right:641.4px;top:346.46px;font-size:7.85px;line-height:9.03px;color:#1c4a80;font-weight:bold;transform:scale(0.95,1.12);transform-origin:100% 7.24px;">12</div>
<div class="t" style="right:570.4px;top:346.46px;font-size:7.85px;line-height:9.03px;color:#1c4a80;font-weight:bold;transform:scale(0.95,1.12);transform-origin:100% 7.24px;">3 868</div>
<div class="t" style="right:498.9px;top:346.46px;font-size:7.85px;line-height:9.03px;color:#333333;font-weight:bold;transform:scale(0.95,1.12);transform-origin:100% 7.24px;">19 468</div>
<div class="t" style="right:472.6px;top:346.46px;font-size:7.85px;line-height:9.03px;color:#1c4a80;font-weight:bold;transform:scale(0.95,1.12);transform-origin:100% 7.24px;">1</div>
<div class="t" style="right:448.0px;top:346.46px;font-size:7.85px;line-height:9.03px;color:#1c4a80;font-weight:bold;transform:scale(0.95,1.12);transform-origin:100% 7.24px;">1</div>
<div class="t" style="right:381.79999999999995px;top:346.46px;font-size:7.85px;line-height:9.03px;color:#1c4a80;font-weight:bold;transform:scale(0.95,1.12);transform-origin:100% 7.24px;">-701</div>
<div class="t" style="right:323.6px;top:346.46px;font-size:7.85px;line-height:9.03px;color:#f01010;font-weight:bold;transform:scale(0.95,1.12);transform-origin:100% 7.24px;">-11 621</div>
<div class="t" style="right:265.6px;top:346.46px;font-size:7.85px;line-height:9.03px;color:#1c4a80;font-weight:bold;transform:scale(0.95,1.12);transform-origin:100% 7.24px;">13</div>
<div class="t" style="right:207.79999999999995px;top:346.46px;font-size:7.85px;line-height:9.03px;color:#1c4a80;font-weight:bold;transform:scale(0.95,1.12);transform-origin:100% 7.24px;">13</div>
<div class="t" style="right:136.29999999999995px;top:346.46px;font-size:7.85px;line-height:9.03px;color:#1c4a80;font-weight:bold;transform:scale(0.95,1.12);transform-origin:100% 7.24px;">3 167</div>
<div class="t" style="right:65.10000000000002px;top:346.46px;font-size:7.85px;line-height:9.03px;color:#333333;font-weight:bold;transform:scale(0.95,1.12);transform-origin:100% 7.24px;">7 847</div>
<div class="t" style="left:62px;top:356.96px;font-size:7.85px;line-height:9.03px;color:#585858;transform:scaleY(1.12);transform-origin:0 7.24px;">Вешалка для одежды</div>
<div class="t" style="right:700.2px;top:356.96px;font-size:7.85px;line-height:9.03px;color:#585858;transform:scale(0.98,1.12);transform-origin:100% 7.24px;">12</div>
<div class="t" style="right:641.4px;top:356.96px;font-size:7.85px;line-height:9.03px;color:#585858;transform:scale(0.98,1.12);transform-origin:100% 7.24px;">12</div>
<div class="t" style="right:570.4px;top:356.96px;font-size:7.85px;line-height:9.03px;color:#585858;transform:scale(0.98,1.12);transform-origin:100% 7.24px;">3 868</div>
<div class="t" style="right:498.9px;top:356.96px;font-size:7.85px;line-height:9.03px;color:#585858;transform:scale(0.98,1.12);transform-origin:100% 7.24px;">19 468</div>
<div class="t" style="right:472.6px;top:356.96px;font-size:7.85px;line-height:9.03px;color:#585858;transform:scale(0.98,1.12);transform-origin:100% 7.24px;">-9</div>
<div class="t" style="right:448.0px;top:356.96px;font-size:7.85px;line-height:9.03px;color:#585858;transform:scale(0.98,1.12);transform-origin:100% 7.24px;">-9</div>
<div class="t" style="right:381.79999999999995px;top:356.96px;font-size:7.85px;line-height:9.03px;color:#585858;transform:scale(0.98,1.12);transform-origin:100% 7.24px;">-2 851</div>
<div class="t" style="right:323.6px;top:356.96px;font-size:7.85px;line-height:9.03px;color:#f01010;transform:scale(0.98,1.12);transform-origin:100% 7.24px;">-13 771</div>
<div class="t" style="right:265.6px;top:356.96px;font-size:7.85px;line-height:9.03px;color:#585858;transform:scale(0.98,1.12);transform-origin:100% 7.24px;">3</div>
<div class="t" style="right:207.79999999999995px;top:356.96px;font-size:7.85px;line-height:9.03px;color:#585858;transform:scale(0.98,1.12);transform-origin:100% 7.24px;">3</div>
<div class="t" style="right:136.29999999999995px;top:356.96px;font-size:7.85px;line-height:9.03px;color:#585858;transform:scale(0.98,1.12);transform-origin:100% 7.24px;">1 017</div>
<div class="t" style="right:65.10000000000002px;top:356.96px;font-size:7.85px;line-height:9.03px;color:#585858;transform:scale(0.98,1.12);transform-origin:100% 7.24px;">5 697</div>
<div class="t" style="left:50.7px;top:367.46px;font-size:7.85px;line-height:9.03px;color:#1c4a80;font-weight:bold;transform:scaleY(1.12);transform-origin:0 7.24px;">Склад коммерческой службы</div>
<div class="t" style="right:700.2px;top:367.46px;font-size:7.85px;line-height:9.03px;color:#1c4a80;font-weight:bold;transform:scale(0.95,1.12);transform-origin:100% 7.24px;">1</div>
<div class="t" style="right:641.4px;top:367.46px;font-size:7.85px;line-height:9.03px;color:#1c4a80;font-weight:bold;transform:scale(0.95,1.12);transform-origin:100% 7.24px;">1</div>
<div class="t" style="right:570.4px;top:367.46px;font-size:7.85px;line-height:9.03px;color:#1c4a80;font-weight:bold;transform:scale(0.95,1.12);transform-origin:100% 7.24px;">10 958,46</div>
<div class="t" style="right:498.9px;top:367.46px;font-size:7.85px;line-height:9.03px;color:#333333;font-weight:bold;transform:scale(0.95,1.12);transform-origin:100% 7.24px;">10 958,46</div>
<div class="t" style="right:265.6px;top:367.46px;font-size:7.85px;line-height:9.03px;color:#1c4a80;font-weight:bold;transform:scale(0.95,1.12);transform-origin:100% 7.24px;">1</div>
<div class="t" style="right:207.79999999999995px;top:367.46px;font-size:7.85px;line-height:9.03px;color:#1c4a80;font-weight:bold;transform:scale(0.95,1.12);transform-origin:100% 7.24px;">1</div>
<div class="t" style="right:136.29999999999995px;top:367.46px;font-size:7.85px;line-height:9.03px;color:#1c4a80;font-weight:bold;transform:scale(0.95,1.12);transform-origin:100% 7.24px;">10 958,46</div>
<div class="t" style="right:65.10000000000002px;top:367.46px;font-size:7.85px;line-height:9.03px;color:#333333;font-weight:bold;transform:scale(0.95,1.12);transform-origin:100% 7.24px;">10 958,46</div>
<div class="t" style="left:50.7px;top:377.96px;font-size:7.85px;line-height:9.03px;color:#1c4a80;font-weight:bold;transform:scaleY(1.12);transform-origin:0 7.24px;">Склад отдела снабжения (ЭЛ-1)</div>
<div class="t" style="right:700.2px;top:377.96px;font-size:7.85px;line-height:9.03px;color:#1c4a80;font-weight:bold;transform:scale(0.95,1.12);transform-origin:100% 7.24px;">54</div>
<div class="t" style="right:641.4px;top:377.96px;font-size:7.85px;line-height:9.03px;color:#1c4a80;font-weight:bold;transform:scale(0.95,1.12);transform-origin:100% 7.24px;">54</div>
<div class="t" style="right:570.4px;top:377.96px;font-size:7.85px;line-height:9.03px;color:#1c4a80;font-weight:bold;transform:scale(0.95,1.12);transform-origin:100% 7.24px;">82 870</div>
<div class="t" style="right:498.9px;top:377.96px;font-size:7.85px;line-height:9.03px;color:#333333;font-weight:bold;transform:scale(0.95,1.12);transform-origin:100% 7.24px;">82 870</div>
<div class="t" style="right:472.6px;top:377.96px;font-size:7.85px;line-height:9.03px;color:#1c4a80;font-weight:bold;transform:scale(0.95,1.12);transform-origin:100% 7.24px;">-6</div>
<div class="t" style="right:448.0px;top:377.96px;font-size:7.85px;line-height:9.03px;color:#1c4a80;font-weight:bold;transform:scale(0.95,1.12);transform-origin:100% 7.24px;">-6</div>
<div class="t" style="right:381.79999999999995px;top:377.96px;font-size:7.85px;line-height:9.03px;color:#1c4a80;font-weight:bold;transform:scale(0.95,1.12);transform-origin:100% 7.24px;">-2 150</div>
<div class="t" style="right:323.6px;top:377.96px;font-size:7.85px;line-height:9.03px;color:#f01010;font-weight:bold;transform:scale(0.95,1.12);transform-origin:100% 7.24px;">-2 150</div>
<div class="t" style="right:265.6px;top:377.96px;font-size:7.85px;line-height:9.03px;color:#1c4a80;font-weight:bold;transform:scale(0.95,1.12);transform-origin:100% 7.24px;">48</div>
<div class="t" style="right:207.79999999999995px;top:377.96px;font-size:7.85px;line-height:9.03px;color:#1c4a80;font-weight:bold;transform:scale(0.95,1.12);transform-origin:100% 7.24px;">48</div>
<div class="t" style="right:136.29999999999995px;top:377.96px;font-size:7.85px;line-height:9.03px;color:#1c4a80;font-weight:bold;transform:scale(0.95,1.12);transform-origin:100% 7.24px;">80 720</div>
<div class="t" style="right:65.10000000000002px;top:377.96px;font-size:7.85px;line-height:9.03px;color:#333333;font-weight:bold;transform:scale(0.95,1.12);transform-origin:100% 7.24px;">80 720</div>
<div class="t" style="left:50.7px;top:388.46px;font-size:7.85px;line-height:9.03px;color:#1c4a80;font-weight:bold;transform:scaleY(1.12);transform-origin:0 7.24px;">Склад отдела снабжения М1</div>
<div class="t" style="right:700.2px;top:388.46px;font-size:7.85px;line-height:9.03px;color:#1c4a80;font-weight:bold;transform:scale(0.95,1.12);transform-origin:100% 7.24px;">3</div>
<div class="t" style="right:641.4px;top:388.46px;font-size:7.85px;line-height:9.03px;color:#1c4a80;font-weight:bold;transform:scale(0.95,1.12);transform-origin:100% 7.24px;">3</div>
<div class="t" style="right:570.4px;top:388.46px;font-size:7.85px;line-height:9.03px;color:#1c4a80;font-weight:bold;transform:scale(0.95,1.12);transform-origin:100% 7.24px;">4 500</div>
<div class="t" style="right:498.9px;top:388.46px;font-size:7.85px;line-height:9.03px;color:#333333;font-weight:bold;transform:scale(0.95,1.12);transform-origin:100% 7.24px;">4 500</div>
<div class="t" style="right:265.6px;top:388.46px;font-size:7.85px;line-height:9.03px;color:#1c4a80;font-weight:bold;transform:scale(0.95,1.12);transform-origin:100% 7.24px;">3</div>
<div class="t" style="right:207.79999999999995px;top:388.46px;font-size:7.85px;line-height:9.03px;color:#1c4a80;font-weight:bold;transform:scale(0.95,1.12);transform-origin:100% 7.24px;">3</div>
<div class="t" style="right:136.29999999999995px;top:388.46px;font-size:7.85px;line-height:9.03px;color:#1c4a80;font-weight:bold;transform:scale(0.95,1.12);transform-origin:100% 7.24px;">4 500</div>
<div class="t" style="right:65.10000000000002px;top:388.46px;font-size:7.85px;line-height:9.03px;color:#333333;font-weight:bold;transform:scale(0.95,1.12);transform-origin:100% 7.24px;">4 500</div>
<div class="t" style="left:50.7px;top:398.96px;font-size:7.85px;line-height:9.03px;color:#1c4a80;font-weight:bold;transform:scaleY(1.12);transform-origin:0 7.24px;">Цеховая кладовая 2: Участок столярный</div>
<div class="t" style="right:700.2px;top:398.96px;font-size:7.85px;line-height:9.03px;color:#1c4a80;font-weight:bold;transform:scale(0.95,1.12);transform-origin:100% 7.24px;">10</div>
<div class="t" style="right:570.4px;top:398.96px;font-size:7.85px;line-height:9.03px;color:#1c4a80;font-weight:bold;transform:scale(0.95,1.12);transform-origin:100% 7.24px;">1 300</div>
<div class="t" style="right:265.6px;top:398.96px;font-size:7.85px;line-height:9.03px;color:#1c4a80;font-weight:bold;transform:scale(0.95,1.12);transform-origin:100% 7.24px;">10</div>
<div class="t" style="right:136.29999999999995px;top:398.96px;font-size:7.85px;line-height:9.03px;color:#1c4a80;font-weight:bold;transform:scale(0.95,1.12);transform-origin:100% 7.24px;">1 300</div>
<div class="t" style="left:62px;top:409.46px;font-size:7.85px;line-height:9.03px;color:#585858;transform:scaleY(1.12);transform-origin:0 7.24px;">Доска сосновая</div>
<div class="t" style="right:700.2px;top:409.46px;font-size:7.85px;line-height:9.03px;color:#585858;transform:scale(0.98,1.12);transform-origin:100% 7.24px;">10</div>
<div class="t" style="right:570.4px;top:409.46px;font-size:7.85px;line-height:9.03px;color:#585858;transform:scale(0.98,1.12);transform-origin:100% 7.24px;">1 300</div>
<div class="t" style="right:265.6px;top:409.46px;font-size:7.85px;line-height:9.03px;color:#585858;transform:scale(0.98,1.12);transform-origin:100% 7.24px;">10</div>
<div class="t" style="right:136.29999999999995px;top:409.46px;font-size:7.85px;line-height:9.03px;color:#585858;transform:scale(0.98,1.12);transform-origin:100% 7.24px;">1 300</div>
<div class="t" style="left:39.3px;top:419.96px;font-size:7.85px;line-height:9.03px;color:#1c4a80;font-weight:bold;transform:scaleY(1.12);transform-origin:0 7.24px;">Торговый дом "Комплексный"</div>
<div class="t" style="right:700.2px;top:419.96px;font-size:7.85px;line-height:9.03px;color:#1c4a80;font-weight:bold;transform:scale(0.95,1.12);transform-origin:100% 7.24px;">28 273</div>
<div class="t" style="right:641.4px;top:419.96px;font-size:7.85px;line-height:9.03px;color:#1c4a80;font-weight:bold;transform:scale(0.95,1.12);transform-origin:100% 7.24px;">26 684</div>
<div class="t" style="right:570.4px;top:419.96px;font-size:7.85px;line-height:9.03px;color:#1c4a80;font-weight:bold;transform:scale(0.95,1.12);transform-origin:100% 7.24px;">27 007 096,68</div>
<div class="t" style="right:498.9px;top:419.96px;font-size:7.85px;line-height:9.03px;color:#333333;font-weight:bold;transform:scale(0.95,1.12);transform-origin:100% 7.24px;">26 501 806,69</div>
<div class="t" style="right:472.6px;top:419.96px;font-size:7.85px;line-height:9.03px;color:#1c4a80;font-weight:bold;transform:scale(0.95,1.12);transform-origin:100% 7.24px;">72</div>
<div class="t" style="right:448.0px;top:419.96px;font-size:7.85px;line-height:9.03px;color:#1c4a80;font-weight:bold;transform:scale(0.95,1.12);transform-origin:100% 7.24px;">14</div>
<div class="t" style="right:381.79999999999995px;top:419.96px;font-size:7.85px;line-height:9.03px;color:#1c4a80;font-weight:bold;transform:scale(0.95,1.12);transform-origin:100% 7.24px;">1 029 000</div>
<div class="t" style="right:323.6px;top:419.96px;font-size:7.85px;line-height:9.03px;color:#333333;font-weight:bold;transform:scale(0.95,1.12);transform-origin:100% 7.24px;">194 166,66</div>
<div class="t" style="right:265.6px;top:419.96px;font-size:7.85px;line-height:9.03px;color:#1c4a80;font-weight:bold;transform:scale(0.95,1.12);transform-origin:100% 7.24px;">28 345</div>
<div class="t" style="right:207.79999999999995px;top:419.96px;font-size:7.85px;line-height:9.03px;color:#1c4a80;font-weight:bold;transform:scale(0.95,1.12);transform-origin:100% 7.24px;">26 698</div>
<div class="t" style="right:136.29999999999995px;top:419.96px;font-size:7.85px;line-height:9.03px;color:#1c4a80;font-weight:bold;transform:scale(0.95,1.12);transform-origin:100% 7.24px;">28 036 096,68</div>
<div class="t" style="right:65.10000000000002px;top:419.96px;font-size:7.85px;line-height:9.03px;color:#333333;font-weight:bold;transform:scale(0.95,1.12);transform-origin:100% 7.24px;">26 695 973,35</div>
<div class="t" style="left:50.7px;top:430.46px;font-size:7.85px;line-height:9.03px;color:#1c4a80;font-weight:bold;transform:scaleY(1.12);transform-origin:0 7.24px;">Kikinda (Сербия)</div>
<div class="t" style="right:700.2px;top:430.46px;font-size:7.85px;line-height:9.03px;color:#1c4a80;font-weight:bold;transform:scale(0.95,1.12);transform-origin:100% 7.24px;">8</div>
<div class="t" style="right:570.4px;top:430.46px;font-size:7.85px;line-height:9.03px;color:#1c4a80;font-weight:bold;transform:scale(0.95,1.12);transform-origin:100% 7.24px;">14 673,34</div>
<div class="t" style="right:265.6px;top:430.46px;font-size:7.85px;line-height:9.03px;color:#1c4a80;font-weight:bold;transform:scale(0.95,1.12);transform-origin:100% 7.24px;">8</div>
<div class="t" style="right:136.29999999999995px;top:430.46px;font-size:7.85px;line-height:9.03px;color:#1c4a80;font-weight:bold;transform:scale(0.95,1.12);transform-origin:100% 7.24px;">14 673,34</div>
<div class="t" style="left:62px;top:440.96px;font-size:7.85px;line-height:9.03px;color:#585858;transform:scaleY(1.12);transform-origin:0 7.24px;">Вентилятор настольный, Модель 901</div>
<div class="t" style="right:700.2px;top:440.96px;font-size:7.85px;line-height:9.03px;color:#585858;transform:scale(0.98,1.12);transform-origin:100% 7.24px;">3</div>
<div class="t" style="right:570.4px;top:440.96px;font-size:7.85px;line-height:9.03px;color:#585858;transform:scale(0.98,1.12);transform-origin:100% 7.24px;">5 500</div>
<div class="t" style="right:265.6px;top:440.96px;font-size:7.85px;line-height:9.03px;color:#585858;transform:scale(0.98,1.12);transform-origin:100% 7.24px;">3</div>
<div class="t" style="right:136.29999999999995px;top:440.96px;font-size:7.85px;line-height:9.03px;color:#585858;transform:scale(0.98,1.12);transform-origin:100% 7.24px;">5 500</div>
<div class="t" style="left:62px;top:451.46px;font-size:7.85px;line-height:9.03px;color:#585858;transform:scaleY(1.12);transform-origin:0 7.24px;">Вентилятор ОРБИТА,STERLING,ЯП.</div>
<div class="t" style="right:700.2px;top:451.46px;font-size:7.85px;line-height:9.03px;color:#585858;transform:scale(0.98,1.12);transform-origin:100% 7.24px;">4</div>
<div class="t" style="right:570.4px;top:451.46px;font-size:7.85px;line-height:9.03px;color:#585858;transform:scale(0.98,1.12);transform-origin:100% 7.24px;">3 666,67</div>
<div class="t" style="right:265.6px;top:451.46px;font-size:7.85px;line-height:9.03px;color:#585858;transform:scale(0.98,1.12);transform-origin:100% 7.24px;">4</div>
<div class="t" style="right:136.29999999999995px;top:451.46px;font-size:7.85px;line-height:9.03px;color:#585858;transform:scale(0.98,1.12);transform-origin:100% 7.24px;">3 666,67</div>
<div class="t" style="left:62px;top:461.96px;font-size:7.85px;line-height:9.03px;color:#585858;transform:scaleY(1.12);transform-origin:0 7.24px;">Кондиционер БК-2300</div>
<div class="t" style="right:700.2px;top:461.96px;font-size:7.85px;line-height:9.03px;color:#585858;transform:scale(0.98,1.12);transform-origin:100% 7.24px;">1</div>
<div class="t" style="right:570.4px;top:461.96px;font-size:7.85px;line-height:9.03px;color:#585858;transform:scale(0.98,1.12);transform-origin:100% 7.24px;">5 506,67</div>
<div class="t" style="right:265.6px;top:461.96px;font-size:7.85px;line-height:9.03px;color:#585858;transform:scale(0.98,1.12);transform-origin:100% 7.24px;">1</div>
<div class="t" style="right:136.29999999999995px;top:461.96px;font-size:7.85px;line-height:9.03px;color:#585858;transform:scale(0.98,1.12);transform-origin:100% 7.24px;">5 506,67</div>
<div class="t" style="left:50.7px;top:472.46px;font-size:7.85px;line-height:9.03px;color:#1c4a80;font-weight:bold;transform:scaleY(1.12);transform-origin:0 7.24px;">Автономная торговая точка</div>
<div class="t" style="right:700.2px;top:472.46px;font-size:7.85px;line-height:9.03px;color:#1c4a80;font-weight:bold;transform:scale(0.95,1.12);transform-origin:100% 7.24px;">257</div>
<div class="t" style="right:641.4px;top:472.46px;font-size:7.85px;line-height:9.03px;color:#1c4a80;font-weight:bold;transform:scale(0.95,1.12);transform-origin:100% 7.24px;">257</div>
<div class="t" style="right:570.4px;top:472.46px;font-size:7.85px;line-height:9.03px;color:#1c4a80;font-weight:bold;transform:scale(0.95,1.12);transform-origin:100% 7.24px;">14 527,21</div>
<div class="t" style="right:498.9px;top:472.46px;font-size:7.85px;line-height:9.03px;color:#333333;font-weight:bold;transform:scale(0.95,1.12);transform-origin:100% 7.24px;">14 527,21</div>
<div class="t" style="right:265.6px;top:472.46px;font-size:7.85px;line-height:9.03px;color:#1c4a80;font-weight:bold;transform:scale(0.95,1.12);transform-origin:100% 7.24px;">257</div>
<div class="t" style="right:207.79999999999995px;top:472.46px;font-size:7.85px;line-height:9.03px;color:#1c4a80;font-weight:bold;transform:scale(0.95,1.12);transform-origin:100% 7.24px;">257</div>
<div class="t" style="right:136.29999999999995px;top:472.46px;font-size:7.85px;line-height:9.03px;color:#1c4a80;font-weight:bold;transform:scale(0.95,1.12);transform-origin:100% 7.24px;">14 527,21</div>
<div class="t" style="right:65.10000000000002px;top:472.46px;font-size:7.85px;line-height:9.03px;color:#333333;font-weight:bold;transform:scale(0.95,1.12);transform-origin:100% 7.24px;">14 527,21</div>
<div class="t" style="left:50.7px;top:482.96px;font-size:7.85px;line-height:9.03px;color:#1c4a80;font-weight:bold;transform:scaleY(1.12);transform-origin:0 7.24px;">Бытовая техника</div>
<div class="t" style="right:700.2px;top:482.96px;font-size:7.85px;line-height:9.03px;color:#1c4a80;font-weight:bold;transform:scale(0.95,1.12);transform-origin:100% 7.24px;">328</div>
<div class="t" style="right:641.4px;top:482.96px;font-size:7.85px;line-height:9.03px;color:#1c4a80;font-weight:bold;transform:scale(0.95,1.12);transform-origin:100% 7.24px;">323</div>
<div class="t" style="right:570.4px;top:482.96px;font-size:7.85px;line-height:9.03px;color:#1c4a80;font-weight:bold;transform:scale(0.95,1.12);transform-origin:100% 7.24px;">941 666,53</div>
<div class="t" style="right:498.9px;top:482.96px;font-size:7.85px;line-height:9.03px;color:#333333;font-weight:bold;transform:scale(0.95,1.12);transform-origin:100% 7.24px;">929 416,54</div>
<div class="t" style="right:265.6px;top:482.96px;font-size:7.85px;line-height:9.03px;color:#1c4a80;font-weight:bold;transform:scale(0.95,1.12);transform-origin:100% 7.24px;">328</div>
<div class="t" style="right:207.79999999999995px;top:482.96px;font-size:7.85px;line-height:9.03px;color:#1c4a80;font-weight:bold;transform:scale(0.95,1.12);transform-origin:100% 7.24px;">323</div>
<div class="t" style="right:136.29999999999995px;top:482.96px;font-size:7.85px;line-height:9.03px;color:#1c4a80;font-weight:bold;transform:scale(0.95,1.12);transform-origin:100% 7.24px;">941 666,53</div>
<div class="t" style="right:65.10000000000002px;top:482.96px;font-size:7.85px;line-height:9.03px;color:#333333;font-weight:bold;transform:scale(0.95,1.12);transform-origin:100% 7.24px;">929 416,54</div>
<div class="t" style="left:62px;top:493.46px;font-size:7.85px;line-height:9.03px;color:#585858;transform:scaleY(1.12);transform-origin:0 7.24px;">Вентилятор BINATONE ALPINE 160вт, напольный,</div>
<div class="t" style="left:62px;top:503.66px;font-size:7.85px;line-height:9.03px;color:#585858;transform:scaleY(1.12);transform-origin:0 7.24px;">оконный</div>
<div class="t" style="right:700.2px;top:493.46px;font-size:7.85px;line-height:9.03px;color:#585858;transform:scale(0.98,1.12);transform-origin:100% 7.24px;">11</div>
<div class="t" style="right:641.4px;top:493.46px;font-size:7.85px;line-height:9.03px;color:#585858;transform:scale(0.98,1.12);transform-origin:100% 7.24px;">10</div>
<div class="t" style="right:570.4px;top:493.46px;font-size:7.85px;line-height:9.03px;color:#585858;transform:scale(0.98,1.12);transform-origin:100% 7.24px;">12 750</div>
<div class="t" style="right:498.9px;top:493.46px;font-size:7.85px;line-height:9.03px;color:#585858;transform:scale(0.98,1.12);transform-origin:100% 7.24px;">11 666,67</div>
<div class="t" style="right:265.6px;top:493.46px;font-size:7.85px;line-height:9.03px;color:#585858;transform:scale(0.98,1.12);transform-origin:100% 7.24px;">11</div>
<div class="t" style="right:207.79999999999995px;top:493.46px;font-size:7.85px;line-height:9.03px;color:#585858;transform:scale(0.98,1.12);transform-origin:100% 7.24px;">10</div>
<div class="t" style="right:136.29999999999995px;top:493.46px;font-size:7.85px;line-height:9.03px;color:#585858;transform:scale(0.98,1.12);transform-origin:100% 7.24px;">12 750</div>
<div class="t" style="right:65.10000000000002px;top:493.46px;font-size:7.85px;line-height:9.03px;color:#585858;transform:scale(0.98,1.12);transform-origin:100% 7.24px;">11 666,67</div>
<div class="t" style="left:62px;top:514.46px;font-size:7.85px;line-height:9.03px;color:#585858;transform:scaleY(1.12);transform-origin:0 7.24px;">Вентилятор JIPONIC (Тайв.), напольный</div>
<div class="t" style="right:700.2px;top:514.46px;font-size:7.85px;line-height:9.03px;color:#585858;transform:scale(0.98,1.12);transform-origin:100% 7.24px;">10</div>
<div class="t" style="right:641.4px;top:514.46px;font-size:7.85px;line-height:9.03px;color:#585858;transform:scale(0.98,1.12);transform-origin:100% 7.24px;">9</div>
<div class="t" style="right:570.4px;top:514.46px;font-size:7.85px;line-height:9.03px;color:#585858;transform:scale(0.98,1.12);transform-origin:100% 7.24px;">14 000</div>
<div class="t" style="right:498.9px;top:514.46px;font-size:7.85px;line-height:9.03px;color:#585858;transform:scale(0.98,1.12);transform-origin:100% 7.24px;">12 750</div>
<div class="t" style="right:265.6px;top:514.46px;font-size:7.85px;line-height:9.03px;color:#585858;transform:scale(0.98,1.12);transform-origin:100% 7.24px;">10</div>
<div class="t" style="right:207.79999999999995px;top:514.46px;font-size:7.85px;line-height:9.03px;color:#585858;transform:scale(0.98,1.12);transform-origin:100% 7.24px;">9</div>
<div class="t" style="right:136.29999999999995px;top:514.46px;font-size:7.85px;line-height:9.03px;color:#585858;transform:scale(0.98,1.12);transform-origin:100% 7.24px;">14 000</div>
<div class="t" style="right:65.10000000000002px;top:514.46px;font-size:7.85px;line-height:9.03px;color:#585858;transform:scale(0.98,1.12);transform-origin:100% 7.24px;">12 750</div>
<div class="t" style="left:62px;top:524.96px;font-size:7.85px;line-height:9.03px;color:#585858;transform:scaleY(1.12);transform-origin:0 7.24px;">Комбайн MOULINEX  A77 4C</div>
<div class="t" style="right:700.2px;top:524.96px;font-size:7.85px;line-height:9.03px;color:#585858;transform:scale(0.98,1.12);transform-origin:100% 7.24px;">22</div>
<div class="t" style="right:641.4px;top:524.96px;font-size:7.85px;line-height:9.03px;color:#585858;transform:scale(0.98,1.12);transform-origin:100% 7.24px;">20</div>
<div class="t" style="right:570.4px;top:524.96px;font-size:7.85px;line-height:9.03px;color:#585858;transform:scale(0.98,1.12);transform-origin:100% 7.24px;">82 127,17</div>
<div class="t" style="right:498.9px;top:524.96px;font-size:7.85px;line-height:9.03px;color:#585858;transform:scale(0.98,1.12);transform-origin:100% 7.24px;">76 460,51</div>
<div class="t" style="right:265.6px;top:524.96px;font-size:7.85px;line-height:9.03px;color:#585858;transform:scale(0.98,1.12);transform-origin:100% 7.24px;">22</div>
<div class="t" style="right:207.79999999999995px;top:524.96px;font-size:7.85px;line-height:9.03px;color:#585858;transform:scale(0.98,1.12);transform-origin:100% 7.24px;">20</div>
<div class="t" style="right:136.29999999999995px;top:524.96px;font-size:7.85px;line-height:9.03px;color:#585858;transform:scale(0.98,1.12);transform-origin:100% 7.24px;">82 127,17</div>
<div class="t" style="right:65.10000000000002px;top:524.96px;font-size:7.85px;line-height:9.03px;color:#585858;transform:scale(0.98,1.12);transform-origin:100% 7.24px;">76 460,51</div>
<div class="t" style="left:62px;top:535.46px;font-size:7.85px;line-height:9.03px;color:#585858;transform:scaleY(1.12);transform-origin:0 7.24px;">Кофеварка BRAUN KF22R</div>
<div class="t" style="right:700.2px;top:535.46px;font-size:7.85px;line-height:9.03px;color:#585858;transform:scale(0.98,1.12);transform-origin:100% 7.24px;">11</div>
<div class="t" style="right:641.4px;top:535.46px;font-size:7.85px;line-height:9.03px;color:#585858;transform:scale(0.98,1.12);transform-origin:100% 7.24px;">10</div>
<div class="t" style="right:570.4px;top:535.46px;font-size:7.85px;line-height:9.03px;color:#585858;transform:scale(0.98,1.12);transform-origin:100% 7.24px;">60 083,33</div>
<div class="t" style="right:498.9px;top:535.46px;font-size:7.85px;line-height:9.03px;color:#585858;transform:scale(0.98,1.12);transform-origin:100% 7.24px;">55 833,33</div>
<div class="t" style="right:265.6px;top:535.46px;font-size:7.85px;line-height:9.03px;color:#585858;transform:scale(0.98,1.12);transform-origin:100% 7.24px;">11</div>
<div class="t" style="right:207.79999999999995px;top:535.46px;font-size:7.85px;line-height:9.03px;color:#585858;transform:scale(0.98,1.12);transform-origin:100% 7.24px;">10</div>
<div class="t" style="right:136.29999999999995px;top:535.46px;font-size:7.85px;line-height:9.03px;color:#585858;transform:scale(0.98,1.12);transform-origin:100% 7.24px;">60 083,33</div>
<div class="t" style="right:65.10000000000002px;top:535.46px;font-size:7.85px;line-height:9.03px;color:#585858;transform:scale(0.98,1.12);transform-origin:100% 7.24px;">55 833,33</div>
<div class="t" style="left:50.7px;top:545.96px;font-size:7.85px;line-height:9.03px;color:#1c4a80;font-weight:bold;transform:scaleY(1.12);transform-origin:0 7.24px;">Договор (передача на отв. хранение)</div>
<div class="t" style="right:472.6px;top:545.96px;font-size:7.85px;line-height:9.03px;color:#1c4a80;font-weight:bold;transform:scale(0.95,1.12);transform-origin:100% 7.24px;">20</div>
<div class="t" style="right:381.79999999999995px;top:545.96px;font-size:7.85px;line-height:9.03px;color:#1c4a80;font-weight:bold;transform:scale(0.95,1.12);transform-origin:100% 7.24px;">366 666,67</div>
<div class="t" style="right:265.6px;top:545.96px;font-size:7.85px;line-height:9.03px;color:#1c4a80;font-weight:bold;transform:scale(0.95,1.12);transform-origin:100% 7.24px;">20</div>
<div class="t" style="right:136.29999999999995px;top:545.96px;font-size:7.85px;line-height:9.03px;color:#1c4a80;font-weight:bold;transform:scale(0.95,1.12);transform-origin:100% 7.24px;">366 666,67</div>
</div>
<div class="a" style="left:10.5px;top:218px;width:27px;height:1px;background:#c8c8c8"></div>
<div class="a" style="left:960.3px;top:218px;width:55px;height:1px;background:#c8c8c8"></div>
<div class="a" style="left:0;top:0;width:1024px;height:554px;overflow:hidden">
<div class="a" style="left:15.5px;top:218.5px;width:1px;height:115.5px;background:#c9c9c9"></div>
<div class="a" style="left:15.5px;top:333.5px;width:22px;height:1px;background:#c9c9c9"></div>
<div class="a" style="left:24px;top:226.75px;width:1px;height:23.25px;background:#c9c9c9"></div>
<div class="a" style="left:24px;top:249.5px;width:13.5px;height:1px;background:#c9c9c9"></div>
<div class="a" style="left:24px;top:258.25px;width:1px;height:12.75px;background:#c9c9c9"></div>
<div class="a" style="left:24px;top:270.5px;width:13.5px;height:1px;background:#c9c9c9"></div>
<div class="a" style="left:24px;top:279.25px;width:1px;height:54.75px;background:#c9c9c9"></div>
<div class="a" style="left:24px;top:333.5px;width:13.5px;height:1px;background:#c9c9c9"></div>
<div class="a" style="left:24px;top:352.75px;width:1px;height:12.75px;background:#c9c9c9"></div>
<div class="a" style="left:24px;top:365.0px;width:13.5px;height:1px;background:#c9c9c9"></div>
<div class="a" style="left:24px;top:405.25px;width:1px;height:12.75px;background:#c9c9c9"></div>
<div class="a" style="left:24px;top:417.5px;width:13.5px;height:1px;background:#c9c9c9"></div>
<div class="a" style="left:24px;top:436.75px;width:1px;height:33.75px;background:#c9c9c9"></div>
<div class="a" style="left:24px;top:470.0px;width:13.5px;height:1px;background:#c9c9c9"></div>
<div class="a" style="left:24px;top:489.25px;width:1px;height:54.75px;background:#c9c9c9"></div>
<div class="a" style="left:24px;top:543.5px;width:13.5px;height:1px;background:#c9c9c9"></div>
<div class="a" style="left:15.5px;top:342.25px;width:1px;height:75.75px;background:#c9c9c9"></div>
<div class="a" style="left:15.5px;top:417.5px;width:22px;height:1px;background:#c9c9c9"></div>
<div class="a" style="left:15.5px;top:426.25px;width:1px;height:133.75px;background:#c9c9c9"></div>
<div class="a" style="left:21.0px;top:220.25px;width:7px;height:7px;box-sizing:border-box;border:1px solid #c8c8c8;border-radius:1.5px;background:#fff"></div>
<div class="a" style="left:22.5px;top:223.25px;width:4px;height:1px;background:#888"></div>
<div class="a" style="left:21.0px;top:251.75px;width:7px;height:7px;box-sizing:border-box;border:1px solid #c8c8c8;border-radius:1.5px;background:#fff"></div>
<div class="a" style="left:22.5px;top:254.75px;width:4px;height:1px;background:#888"></div>
<div class="a" style="left:21.0px;top:272.75px;width:7px;height:7px;box-sizing:border-box;border:1px solid #c8c8c8;border-radius:1.5px;background:#fff"></div>
<div class="a" style="left:22.5px;top:275.75px;width:4px;height:1px;background:#888"></div>
<div class="a" style="left:21.0px;top:346.25px;width:7px;height:7px;box-sizing:border-box;border:1px solid #c8c8c8;border-radius:1.5px;background:#fff"></div>
<div class="a" style="left:22.5px;top:349.25px;width:4px;height:1px;background:#888"></div>
<div class="a" style="left:21.0px;top:398.75px;width:7px;height:7px;box-sizing:border-box;border:1px solid #c8c8c8;border-radius:1.5px;background:#fff"></div>
<div class="a" style="left:22.5px;top:401.75px;width:4px;height:1px;background:#888"></div>
<div class="a" style="left:21.0px;top:430.25px;width:7px;height:7px;box-sizing:border-box;border:1px solid #c8c8c8;border-radius:1.5px;background:#fff"></div>
<div class="a" style="left:22.5px;top:433.25px;width:4px;height:1px;background:#888"></div>
<div class="a" style="left:21.0px;top:482.75px;width:7px;height:7px;box-sizing:border-box;border:1px solid #c8c8c8;border-radius:1.5px;background:#fff"></div>
<div class="a" style="left:22.5px;top:485.75px;width:4px;height:1px;background:#888"></div>
<div class="a" style="left:21.0px;top:545.75px;width:7px;height:7px;box-sizing:border-box;border:1px solid #c8c8c8;border-radius:1.5px;background:#fff"></div>
<div class="a" style="left:22.5px;top:548.75px;width:4px;height:1px;background:#888"></div>
<div class="a" style="left:24px;top:552.25px;width:1px;height:10px;background:#c9c9c9"></div>
<div class="a" style="left:12.5px;top:335.75px;width:7px;height:7px;box-sizing:border-box;border:1px solid #c8c8c8;border-radius:1.5px;background:#fff"></div>
<div class="a" style="left:14px;top:338.75px;width:4px;height:1px;background:#888"></div>
<div class="a" style="left:12.5px;top:419.75px;width:7px;height:7px;box-sizing:border-box;border:1px solid #c8c8c8;border-radius:1.5px;background:#fff"></div>
<div class="a" style="left:14px;top:422.75px;width:4px;height:1px;background:#888"></div>
</div>
<div class="a" style="left:925px;top:556.3px;width:72px;height:6.2px;background:#d9d9d9;border-radius:3.2px"></div>
<div class="a" style="left:28.6px;top:556.3px;width:896px;height:6.2px;background:#a0a0a0;border-radius:3.2px"></div>
<div class="a" style="left:18px;top:557.8px;width:0;height:0;border-top:2.5px solid transparent;border-bottom:2.5px solid transparent;border-right:3px solid #555"></div>
<div class="a" style="left:1005.5px;top:558px;width:0;height:0;border-top:2.5px solid transparent;border-bottom:2.5px solid transparent;border-left:3px solid #555"></div>
<div class="a" style="left:1017.9px;top:144px;width:7px;height:391px;background:#dcdcdc;border-radius:3.5px"></div>
<div class="a" style="left:1017.9px;top:302.4px;width:7px;height:100px;background:#a3a3a3;border-radius:3.5px"></div>
<div class="a" style="left:1019px;top:133px;width:0;height:0;border-left:2px solid transparent;border-right:2px solid transparent;border-bottom:3px solid #555"></div>
<div class="a" style="left:1019px;top:543px;width:0;height:0;border-left:2px solid transparent;border-right:2px solid transparent;border-top:3px solid #555"></div>
<div class="a" style="left:957.5px;top:289.3px;width:52.3px;height:16.3px;box-sizing:border-box;border:2px solid #f6cd3a;background:#f0f0f0"></div>
<div class="a" style="left:959.8px;top:291px;width:1px;height:13px;background:#b4bde6"></div>
<div class="a" style="left:0px;top:575.5px;width:1024px;height:8px;background:linear-gradient(#959595,#a9a9a9 2px,#aaaaaa)"></div>
<div class="t" style="left:66.5px;top:579.85px;font-size:9.5px;line-height:10.92px;color:#e8403a;font-weight:bold;">1 000</div>
<svg class="a" style="left:0;top:0" width="1024" height="583" viewBox="0 0 1024 583">
<g stroke="#ff0a0a" stroke-width="3.1" stroke-linecap="round" fill="#ff0a0a">
<line x1="669.9" y1="153.4" x2="768" y2="78.5"/>
<line x1="659" y1="162.7" x2="874" y2="480"/>
</g>
<path d="M775.9 72.3 L761.5 77 L769.5 86 Z" fill="#ff0a0a" stroke="#ff0a0a" stroke-width="1" stroke-linejoin="round"/>
<path d="M880.5 489.5 L871 476 L879.5 472.5 Z" fill="#ff0a0a" stroke="#ff0a0a" stroke-width="1" stroke-linejoin="round"/>
</svg>
</body></html>
